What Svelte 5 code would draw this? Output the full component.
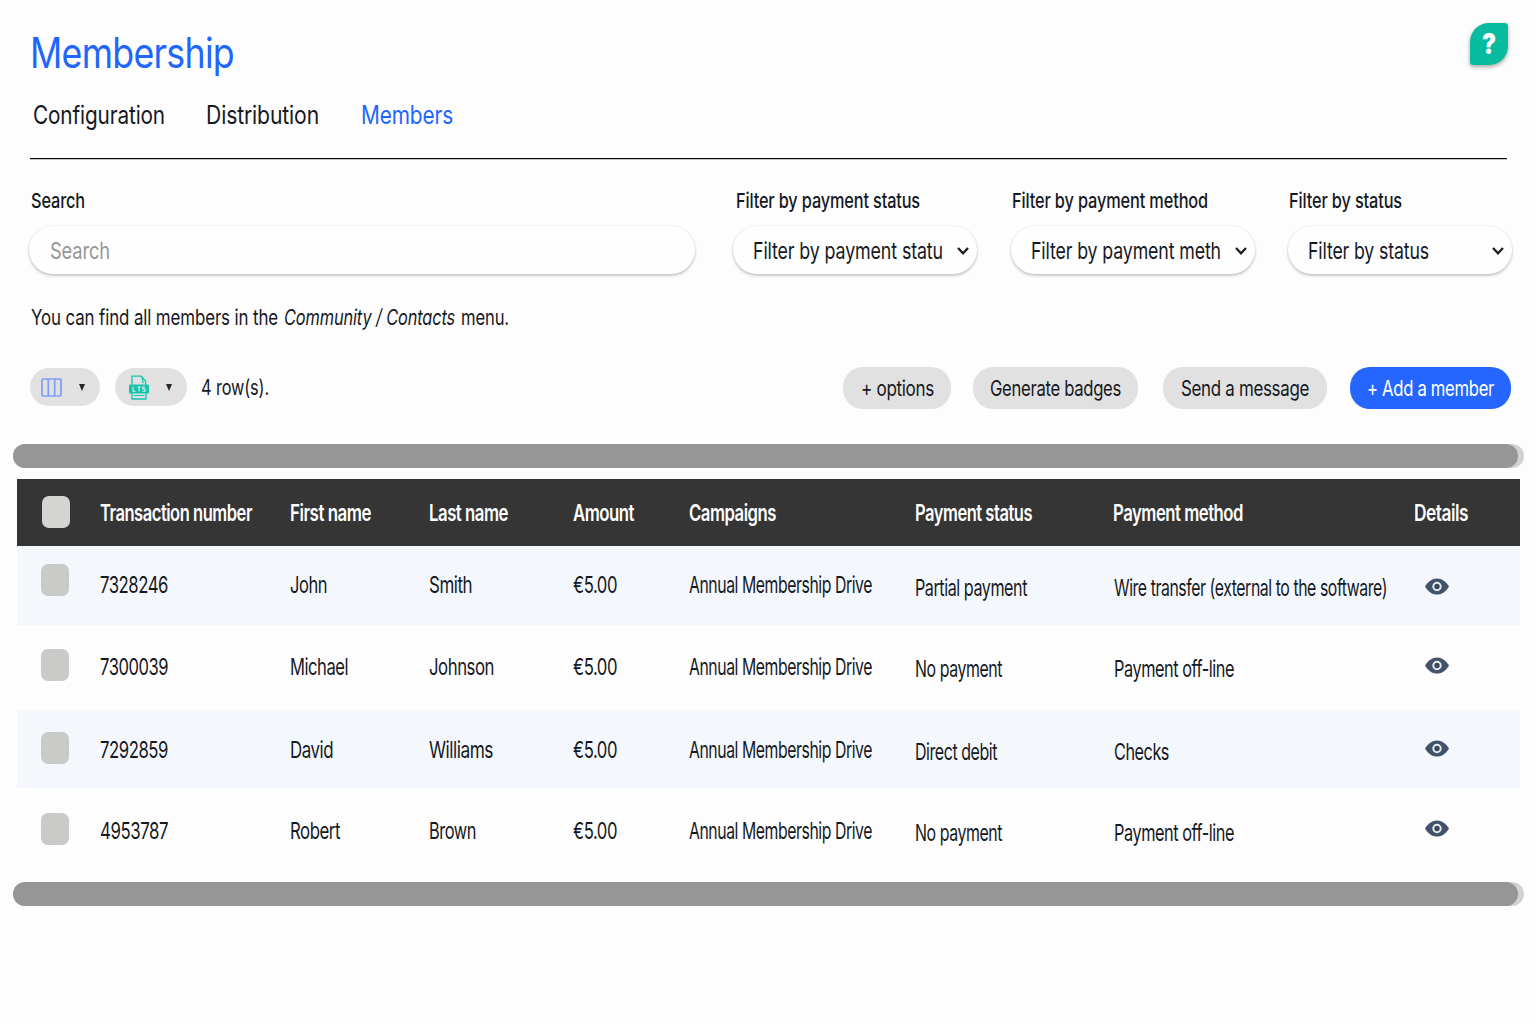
<script>
  const tabs = [
    { text: 'Configuration', w: 132 },
    { text: 'Distribution', w: 113 },
    { text: 'Members', w: 92, active: true }
  ];

  const filters = [
    { label: 'Filter by payment status', lw: 184, value: 'Filter by payment statu', vw: 190 },
    { label: 'Filter by payment method', lw: 196, value: 'Filter by payment meth', vw: 190 },
    { label: 'Filter by status', lw: 113, value: 'Filter by status', vw: 121 }
  ];

  const actions = [
    { text: '+ options', w: 73 },
    { text: 'Generate badges', w: 131 },
    { text: 'Send a message', w: 128 },
    { text: '+ Add a member', w: 127, primary: true }
  ];

  const columns = [
    { text: 'Transaction number', w: 152 },
    { text: 'First name', w: 81 },
    { text: 'Last name', w: 79 },
    { text: 'Amount', w: 61 },
    { text: 'Campaigns', w: 87 },
    { text: 'Payment status', w: 117 },
    { text: 'Payment method', w: 130 },
    { text: 'Details', w: 54 }
  ];

  const drive = ['Annual Membership Drive', 183];
  const amount = ['€5.00', 44];
  const rows = [
    [['7328246', 68], ['John', 37], ['Smith', 43], amount, drive, ['Partial payment', 112], ['Wire transfer (external to the software)', 273]],
    [['7300039', 68], ['Michael', 58], ['Johnson', 65], amount, drive, ['No payment', 87], ['Payment off-line', 120]],
    [['7292859', 68], ['David', 43], ['Williams', 64], amount, drive, ['Direct debit', 82], ['Checks', 55]],
    [['4953787', 68], ['Robert', 50], ['Brown', 47], amount, drive, ['No payment', 87], ['Payment off-line', 120]]
  ];

  // Condenses a label horizontally so that it fills the given width.
  function condense(node, width) {
    const natural = node.getBoundingClientRect().width;
    node.style.transform = `scaleX(${width / natural})`;
  }
</script>

{#snippet label(text, w)}
  <span class="fit" style:width="{w}px"><span class="fit-in" use:condense={w}>{text}</span></span>
{/snippet}

<main>
  <header class="top">
    <h1>{@render label('Membership', 204)}</h1>
    <button class="help" aria-label="Help">{@render label('?', 14)}</button>
  </header>

  <nav>
    {#each tabs as tab}
      <a href="#top" class:active={tab.active}>{@render label(tab.text, tab.w)}</a>
    {/each}
  </nav>

  <section class="filters">
    <div class="field">
      <div class="name">{@render label('Search', 54)}</div>
      <div class="box search">{@render label('Search', 60)}</div>
    </div>
    {#each filters as f}
      <div class="field">
        <div class="name">{@render label(f.label, f.lw)}</div>
        <div class="box select">
          {@render label(f.value, f.vw)}
          <svg class="chev" width="14" height="10" viewBox="0 0 14 10"><path d="M2 2l5 5.300L12 2" fill="none" stroke="#1c1f24" stroke-width="2.3" /></svg>
        </div>
      </div>
    {/each}
  </section>

  <p class="note">
    {@render label('You can find all members in the', 247)}
    <em>{@render label('Community / Contacts', 171)}</em>
    {@render label('menu.', 48)}
  </p>

  <section class="tools">
    <button class="pill" aria-label="Columns">
      <svg width="21" height="19" viewBox="0 0 21 19" fill="none" stroke="#7f9df3" stroke-width="1.7"><rect x="1" y="1" width="19" height="17" rx="1.3" /><path d="M7.300 1v17M13.700 1v17" /></svg>
      <i class="caret"></i>
    </button>
    <button class="pill second" aria-label="Export">
      <svg width="20" height="25" viewBox="0 0 20 25" fill="none" stroke="#16c4ae" stroke-width="1.3">
        <path d="M3 9.500V1.200h9.200l4.400 4.800v3.500M12.200 1.200c1.500 2 1.500 4 1.800 7M3 17v7h14v-7" />
        <rect x="0" y="9.500" width="20" height="9" rx="1" fill="#16c4ae" stroke="none" />
        <path d="M4 11.800v4.400h2.600M8.400 12h3.400M10.100 12v4.400M16 12h-2.300v2H16v2.200h-2.600" stroke="#dcefe9" stroke-width="1.100" />
        <path d="M4.500 20.500h11" stroke-width="1" />
      </svg>
      <i class="caret"></i>
    </button>
    <span class="count">{@render label('4 row(s).', 68)}</span>
    <div class="actions">
      {#each actions as a}
        <button class="action" class:primary={a.primary}>{@render label(a.text, a.w)}</button>
      {/each}
    </div>
  </section>

  <div class="scroll"><div class="thumb"></div></div>

  <section class="table">
    <div class="row head">
      <span class="check"></span>
      {#each columns as c}
        <span class="cell">{@render label(c.text, c.w)}</span>
      {/each}
    </div>
    {#each rows as r}
      <div class="row">
        <span class="check"></span>
        {#each r as [text, w], i}
          <span class="cell" class:pay={i > 4}>{@render label(text, w)}</span>
        {/each}
        <svg class="eye" width="24" height="17" viewBox="0 0 24 17">
          <path d="M0 8.500C3 3.400 7.200.4 12 .4s9 3 12 8.100C21 13.600 16.800 16.600 12 16.600S3 13.600 0 8.500z" fill="#42526a" />
          <circle cx="12" cy="8.500" r="3.700" fill="#3a485c" stroke="#e6eaf0" stroke-width="2" />
        </svg>
      </div>
    {/each}
  </section>

  <div class="scroll bottom"><div class="thumb"></div></div>
</main>

<style>
  :global(body) { background: #fdfdfd; }
  main {
    width: 1536px;
    height: 1024px;
    overflow: hidden;
    font-family: Inter, "Liberation Sans", sans-serif;
    color: #16191f;
    box-sizing: border-box;
    letter-spacing: -0.01em;
  }
  button { border: 0; padding: 0; font: inherit; color: inherit; letter-spacing: inherit; }
  .fit { display: inline-block; white-space: nowrap; text-align: left; }
  .fit-in { display: inline-block; transform-origin: 0 50%; }
  .top { display: flex; justify-content: space-between; height: 90px; padding: 0 28px 0 30px; }
  h1 { margin: 28px 0 0; font-size: 42px; line-height: 50px; font-weight: 400; color: #1f66ff; letter-spacing: -0.02em; }
  .help {
    width: 38px; height: 42px; margin-top: 23px;
    border-radius: 19px 3px 19px 3px;
    background: #07bb9f;
    box-shadow: 0 2px 4px rgba(0, 0, 0, .35);
    color: #fff; font-size: 28px; font-weight: 900; line-height: 42px;
  }
  nav { display: flex; gap: 41px; height: 68px; margin: 0 29px 0 30px; padding-left: 3px; border-bottom: 1px solid #0c0c0c; box-shadow: 0 1px 0 #c4c4c4; }
  nav a { margin-top: 10px; font-size: 25.500px; line-height: 30px; color: inherit; text-decoration: none; }
  nav a.active { color: #1f66ff; margin-left: 1px; }

  .filters { display: grid; grid-template-columns: 666px 244px 244px 224px; column-gap: 34px; padding: 28px 0 0 30px; }
  .field:nth-child(2) { margin-left: 3px; width: 244px; }
  .field:nth-child(3) { margin-left: 3px; width: 244px; }
  .field:nth-child(4) { margin-left: 2px; width: 224px; }
  .name { height: 39px; font-size: 20.500px; line-height: 28px; font-weight: 500; padding-left: 1px; }
  .field:nth-child(2) .name { padding-left: 3px; }
  .box {
    display: flex; align-items: center; height: 48px; box-sizing: border-box; border-radius: 24px;
    background: #fefefe; font-size: 23.500px; padding: 0 7px 0 20px;
    box-shadow: 0 2px 3px rgba(0, 0, 0, .2), 0 0 2px rgba(0, 0, 0, .12);
  }
  .search { color: #969696; margin: 0 1px 0 -1px; padding-left: 21px; }
  .chev { margin: 2px 0 0 auto; }
  .note { display: flex; gap: 6px; margin: 29px 0 0 31px; font-size: 21.500px; line-height: 28px; height: 28px; }

  .tools { display: flex; align-items: flex-start; margin-top: 36px; padding: 0 25px 0 30px; height: 77px; }
  .pill { display: flex; align-items: center; width: 70px; height: 38px; margin-top: 1px; border-radius: 19px; background: #e1e1e1; padding: 0 15px 0 11px; justify-content: space-between; box-sizing: border-box; }
  .second { width: 72px; margin-left: 15px; padding-left: 14px; }
  .caret { border: 3.500px solid transparent; border-width: 0 3.500px; border-top: 7px solid #24272b; }
  .count { margin: 6px 0 0 14px; font-size: 21.500px; line-height: 28px; }
  .actions { display: flex; margin-left: auto; letter-spacing: -0.025em; }
  .action { height: 42px; border-radius: 20px; background: #e1e1e1; font-size: 21.500px; line-height: 43px; }
  .action:nth-child(1) { width: 108px; }
  .action:nth-child(2) { width: 165px; margin-left: 22px; }
  .action:nth-child(3) { width: 164px; margin-left: 25px; }
  .action:nth-child(4) { width: 161px; margin-left: 23px; }
  .action.primary { background: #2466ff; color: #fff; }

  .scroll { width: 1511px; height: 24px; margin-left: 13px; border-radius: 12px; background: #d2d2d2; }
  .thumb { width: 1505px; height: 24px; border-radius: 12px; background: #969696; }
  .bottom { margin-top: 8px; }

  .table { margin: 11px 16px 0 17px; letter-spacing: -0.04em; }
  .row {
    display: grid; align-items: start; box-sizing: border-box;
    grid-template-columns: 59px 190px 139px 143.500px 116px 226px 199px 301px 1fr;
    padding-left: 24px; font-size: 23.500px; line-height: 28px; font-weight: 370;
  }
  .check { width: 28px; height: 32px; border-radius: 7px; background: #cacac8; margin-top: var(--box); }
  .cell { margin-top: var(--text); }
  .pay { margin-top: var(--pay); }
  .eye { margin: var(--eye) 0 0 10px; }
  .head { height: 67px; background: #353535; color: #fff; font-weight: 600; font-size: 22.500px; --box: 17px; --text: 20px; }
  .head .check { background: #d4d4d2; margin-left: 1px; }
  .head .cell:nth-child(n+8) { margin-left: -1px; }
  .row:nth-child(2) { height: 79px; --box: 18px; --text: 25px; --pay: 28px; --eye: 32px; }
  .row:nth-child(3) { height: 85px; --box: 24px; --text: 28px; --pay: 30px; --eye: 32px; }
  .row:nth-child(4) { height: 78px; --box: 22px; --text: 26px; --pay: 28px; --eye: 30px; }
  .row:nth-child(5) { height: 86px; --box: 25px; --text: 29px; --pay: 31px; --eye: 32px; }
  .row:nth-child(even) { background: #f4f8fd; }
</style>
